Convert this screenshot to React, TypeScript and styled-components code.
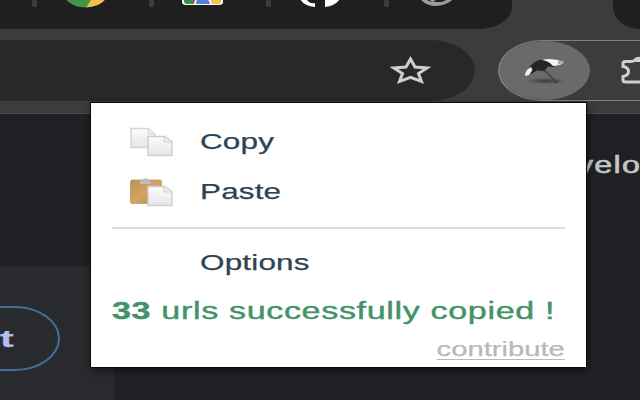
import React from "react";
import styled, { createGlobalStyle } from "styled-components";

const GlobalStyle = createGlobalStyle`
  * { box-sizing: border-box; }
  body { margin: 0; background: #202124; font-family: "Liberation Sans", Arial, sans-serif; }
`;

const Browser = styled.div`
  position: relative;
  width: 640px;
  height: 400px;
  overflow: hidden;
  display: flex;
  flex-direction: column;
  background: #3c3c3c;
`;

const TabStrip = styled.header`
  flex: 0 0 29px;
  display: flex;
  justify-content: space-between;
`;

const TabGroup = styled.div`
  width: 512px;
  background: #1f1f1f;
  border-bottom-right-radius: 33px 22px;
`;

const NextGroup = styled.div`
  width: 27px;
  background: #1f1f1f;
  border-bottom-left-radius: 27px 22px;
`;

const Drawing = styled.svg`
  display: block;
  flex: none;
`;

const Toolbar = styled.div`
  flex: 0 0 85px;
  display: flex;
  padding-top: 11px;
  border-bottom: 1px solid #48494b;
`;

const AddressBar = styled.div`
  width: 475px;
  height: 61px;
  display: flex;
  align-items: center;
  justify-content: flex-end;
  padding-right: 43px;
  background: #282828;
  border-radius: 0 46px 46px 0 / 0 31px 31px 0;
`;

const ExtensionBar = styled.div`
  width: 142px;
  height: 61px;
  margin-left: 23px;
  display: flex;
  align-items: center;
  border: solid #818181;
  border-width: 1px 0 1px 2px;
  border-radius: 46px 0 0 46px / 31px 0 0 31px;
`;

const ExtensionButton = styled.div`
  width: 90px;
  height: 59px;
  margin-right: 31px;
  display: flex;
  align-items: center;
  justify-content: center;
  background: #6c696a;
  border-radius: 50%;
`;

const Page = styled.main`
  flex: 1;
  display: flex;
  justify-content: space-between;
  background: #202125;
`;

const Card = styled.section`
  width: 114px;
  height: 134px;
  margin-top: 152px;
  padding-top: 40px;
  background: #292a2e;
`;

const OutlineButton = styled.div`
  width: 60px;
  height: 65px;
  display: flex;
  align-items: center;
  border: 2px solid #426f9c;
  border-left: 0;
  border-radius: 0 46px 46px 0 / 0 33px 33px 0;
`;

const SiteTitle = styled.div`
  width: 63px;
  padding-top: 37px;
`;

const Text = styled.span<{
  $size: number;
  $stretch: number;
  $color: string;
  $bold?: boolean;
  $right?: boolean;
  $spacing?: number;
  $stroke?: number;
}>`
  display: inline-block;
  white-space: pre;
  font-size: ${(p) => p.$size}px;
  line-height: 28px;
  font-weight: ${(p) => (p.$bold ? 700 : 400)};
  letter-spacing: ${(p) => p.$spacing ?? 0}px;
  -webkit-text-stroke: ${(p) => p.$stroke ?? 0.25}px currentColor;
  color: ${(p) => p.$color};
  transform: scaleX(${(p) => p.$stretch});
  transform-origin: ${(p) => (p.$right ? "right" : "left")} center;
`;

const Popup = styled.aside`
  position: absolute;
  left: 90px;
  top: 102px;
  width: 497px;
  height: 266px;
  padding: 14px 21px 0;
  background: #fff;
  border: 1px solid #090909;
  box-shadow: 1px 3px 8px rgba(0, 0, 0, 0.45);
`;

const MenuItem = styled.div`
  height: 50px;
  display: grid;
  grid-template-columns: 88px 1fr;
  align-items: center;
`;

const IconCell = styled.span`
  padding-left: 17px;
`;

const Divider = styled.hr`
  height: 2px;
  margin: 10px 0 9px;
  border: 0;
  background: #dcdddd;
`;

const Status = styled.div`
  height: 46px;
  display: flex;
  align-items: center;
`;

const Footer = styled.footer`
  display: flex;
  justify-content: flex-end;
`;

const Link = styled(Text)`
  line-height: 20px;
  margin-top: 5px;
  border-bottom: 1px solid #b8b8b8;
  height: 21px;
`;

function TabIcons() {
  return (
    <Drawing width="512" height="29" viewBox="0 0 512 29">
      <g fill="#3c3c3c">
        <rect x="32" width="5" height="7" rx="1" />
        <rect x="149" width="5" height="7" rx="1" />
        <rect x="266" width="5" height="7" rx="1" />
        <rect x="384" width="5" height="7" rx="1" />
      </g>
      <path d="M64-3Q71 7.500 86 7.500L94-3Z" fill="#419445" />
      <path d="M86 7.500Q101 7 107-3H93Z" fill="#f4c14b" />
      <path d="M182-3H223V2Q223 5 219 5H186Q182 5 182 2Z" fill="#fff" />
      <path d="M184-1H195L194 4H187Q184 4 184 1Z" fill="#388d50" />
      <path d="M191 0H195L194 3Z" fill="#d54a42" />
      <path d="M196 4Q196-2 202-3Q209-2 210 4Z" fill="#5580df" />
      <path d="M210-1H221V2Q221 4 218 4H212Z" fill="#f3c44d" />
      <path d="M300-1Q304 6 315 7V3Q310 4 307 0L304-1ZM325-1V7Q335 6 340-1Z" fill="#fff" />
      <path d="M419-3Q424 6 437 6Q449 5 455-3H450Q446 1 441 2L433 2L436 0L431-3H426L432 2Q427 1 424-3Z" fill="#9c9ca0" />
    </Drawing>
  );
}

function StarIcon() {
  return (
    <Drawing width="42" height="30" viewBox="0 0 42 30">
      <path d="M20.500 3L25 11L37 12L28.500 17.500L31.500 25.500L20.500 21.300L9.500 25.500L12.500 17.500L4 12L16 11Z" fill="none" stroke="#cecece" strokeWidth="3" />
    </Drawing>
  );
}

function UmbrellaIcon() {
  return (
    <Drawing width="44" height="30" viewBox="0 0 44 30">
      <defs>
        <radialGradient id="shade">
          <stop offset="0" stopColor="#302d2d" stopOpacity="0.800" />
          <stop offset="1" stopColor="#302d2d" stopOpacity="0" />
        </radialGradient>
      </defs>
      <ellipse cx="23" cy="25" rx="20" ry="3.200" fill="url(#shade)" />
      <path d="M20 13L34 26.500" stroke="#493d3f" strokeWidth="1.700" />
      <path d="M31 26H35" stroke="#493d3f" strokeWidth="2" />
      <path d="M5 14Q8 7 16 4Q25 3 31 8L31 11L25 10.500L21 15L14 14.500L8 18Z" fill="#252525" />
      <path d="M2 20Q2 14 8 11L9.500 14L6 19Z" fill="#f0efef" />
      <path d="M19 4Q29 1.500 41 6L37 9L30 10Q26 5 19 4Z" fill="#f5f4f4" />
      <path d="M35 4L41 6L35 9Z" fill="#aaa" />
    </Drawing>
  );
}

function PuzzleIcon() {
  return (
    <Drawing width="19" height="32" viewBox="0 0 19 32">
      <path d="M19 5.500H14Q12 6.500 10 6.500H4Q2 6.500 2 8.500V11.500Q7.500 12.500 7.500 16.500Q7.500 20.500 2 21.500V25Q2 27 4.500 27H19" fill="none" stroke="#cfcfcf" strokeWidth="3" />
      <path d="M13 6Q14 3 19 3" fill="none" stroke="#cfcfcf" strokeWidth="2.400" />
    </Drawing>
  );
}

function DocumentsIcon({ clipboard = false }: { clipboard?: boolean }) {
  const id = clipboard ? "paste" : "copy";
  return (
    <Drawing width="46" height="32" viewBox="0 0 46 32">
      <defs>
        <linearGradient id={`${id}-paper`} x2="0" y2="1">
          <stop stopColor="#fcfcfc" />
          <stop offset="1" stopColor="#e6e6e7" />
        </linearGradient>
        <linearGradient id={`${id}-board`} x2="1" y2="1">
          <stop stopColor="#bd9052" />
          <stop offset="0.500" stopColor="#d3a564" />
          <stop offset="1" stopColor="#b48444" />
        </linearGradient>
      </defs>
      {clipboard ? (
        <>
          <rect x="1.500" y="4" width="31" height="23.500" rx="1.500" fill={`url(#${id}-board)`} stroke="#b6905c" strokeWidth="0.700" />
          <path d="M11 4.500H13Q13 2.500 16 2.500Q20 2.500 20 4.500H22V8H11Z" fill="#bbbcc0" />
        </>
      ) : (
        <path d="M2 2.500H19L26 8V21.500H2Z" fill={`url(#${id}-paper)`} stroke="#d4d4d4" strokeWidth="1.400" />
      )}
      {!clipboard && <path d="M19 3V8H26" fill="#efefef" stroke="#d4d4d4" />}
      <path d="M19 10.500H36L43 15.500V29.500H19Z" fill={`url(#${id}-paper)`} stroke="#cfcfcf" strokeWidth="1.400" />
      <path d="M35 11V16H42.500" fill="#ededed" stroke="#d0d0d0" />
    </Drawing>
  );
}

export default function App() {
  return (
    <>
      <GlobalStyle />
      <Browser>
        <TabStrip>
          <TabGroup><TabIcons /></TabGroup>
          <NextGroup />
        </TabStrip>
        <Toolbar>
          <AddressBar><StarIcon /></AddressBar>
          <ExtensionBar>
            <ExtensionButton><UmbrellaIcon /></ExtensionButton>
            <PuzzleIcon />
          </ExtensionBar>
        </Toolbar>
        <Page>
          <Card>
            <OutlineButton><Text $size={24} $stretch={1.72} $color="#b0bdee" $bold>t</Text></OutlineButton>
          </Card>
          <SiteTitle><Text $size={23} $stretch={1.4} $color="#c5c5c6" $spacing={0.9} $stroke={0.6}>velo</Text></SiteTitle>
        </Page>
        <Popup>
          <MenuItem>
            <IconCell><DocumentsIcon /></IconCell>
            <Text $size={22} $stretch={1.43} $color="#2f4352" $spacing={0.1}>Copy</Text>
          </MenuItem>
          <MenuItem>
            <IconCell><DocumentsIcon clipboard /></IconCell>
            <Text $size={22} $stretch={1.43} $color="#2f4352" $spacing={0.1}>Paste</Text>
          </MenuItem>
          <Divider />
          <MenuItem>
            <span />
            <Text $size={22} $stretch={1.43} $color="#2f4352" $spacing={0.12}>Options</Text>
          </MenuItem>
          <Status>
            <Text $size={23} $stretch={1.48} $color="#439269" $spacing={0.45} $stroke={0.4}><b>33</b> urls successfully copied !</Text>
          </Status>
          <Footer>
            <Link $size={20} $stretch={1.46} $color="#b8b8b8" $right>contribute</Link>
          </Footer>
        </Popup>
      </Browser>
    </>
  );
}
